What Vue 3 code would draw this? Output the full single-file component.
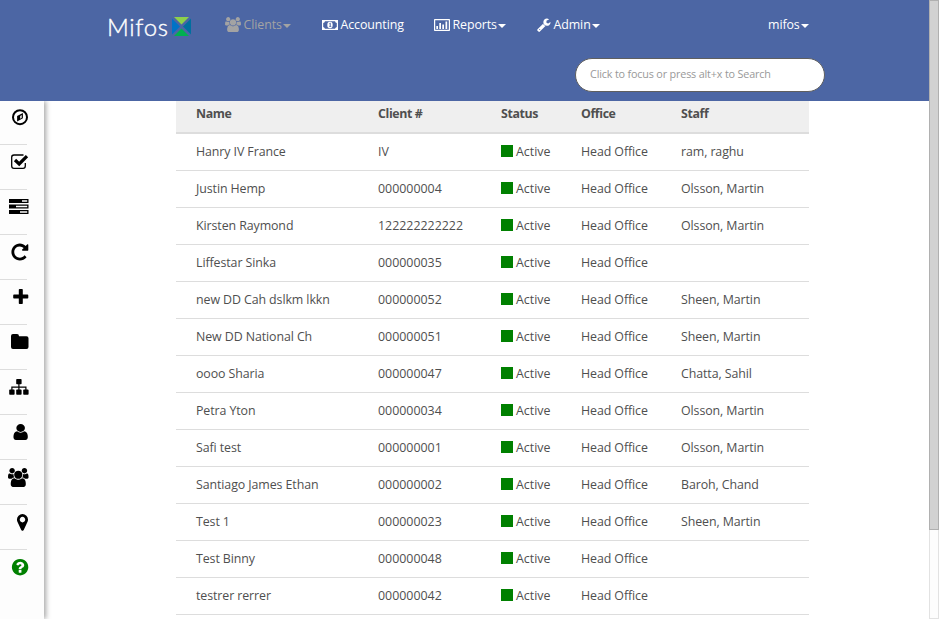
<script setup>
const clients = [
  ['Hanry IV France', 'IV', 'ram, raghu'],
  ['Justin Hemp', '000000004', 'Olsson, Martin'],
  ['Kirsten Raymond', '122222222222', 'Olsson, Martin'],
  ['Liffestar Sinka', '000000035', ''],
  ['new DD Cah dslkm lkkn', '000000052', 'Sheen, Martin'],
  ['New DD National Ch', '000000051', 'Sheen, Martin'],
  ['oooo Sharia', '000000047', 'Chatta, Sahil'],
  ['Petra Yton', '000000034', 'Olsson, Martin'],
  ['Safi test', '000000001', 'Olsson, Martin'],
  ['Santiago James Ethan', '000000002', 'Baroh, Chand'],
  ['Test 1', '000000023', 'Sheen, Martin'],
  ['Test Binny', '000000048', ''],
  ['testrer rerrer', '000000042', ''],
]

const usersPath =
  'M593 896q-162 5-265 128h-134q-82 0-138-40.500t-56-118.500q0-353 124-353 6 0 43.500 21t97.500 42.500 119 21.500q67 0 133-23-5 37-5 66 0 139 81 256zm1071 637q0 120-73 189.500t-194 69.500h-874q-121 0-194-69.500t-73-189.500q0-53 3.500-103.500t14-109 26.500-108.500 43-97.500 62-81 85.500-53.500 111.500-20q10 0 43 21.500t73 48 107 48 135 21.500 135-21.500 107-48 73-48 43-21.500q61 0 111.500 20t85.500 53.500 62 81 43 97.500 26.500 108.500 14 109 3.500 103.500zm-1024-1277q0 106-75 181t-181 75-181-75-75-181 75-181 181-75 181 75 75 181zm704 384q0 159-112.500 271.500t-271.500 112.500-271.500-112.500-112.500-271.500 112.500-271.500 271.500-112.500 271.500 112.500 112.500 271.500zm576 225q0 78-56 118.500t-138 40.500h-134q-103-123-265-128 81-117 81-256 0-29-5-66 66 23 133 23 59 0 119-21.500t97.500-42.500 43.500-21q124 0 124 353zm-128-609q0 106-75 181t-181 75-181-75-75-181 75-181 181-75 181 75 75 181z'
</script>

<template>
  <div class="page">
    <header class="topbar">
      <nav class="nav">
        <a class="brand">
          <span class="brand-name">Mifos</span>
          <svg class="brand-mark" viewBox="0 0 19 19">
            <path fill="#8ed04b" d="M2 0h15L9.500 7.500z" />
            <path fill="#0072c6" d="M0 1.500L8 9.500 0 17.500z" />
            <path fill="#006f9f" d="M19 1.500L11 9.500l8 8z" />
            <path fill="#00b04f" d="M2 19h15L9.500 11.500z" />
          </svg>
        </a>
        <a class="item clients">
          <svg width="16" height="15" viewBox="0 0 1920 1792"><path :d="usersPath" /></svg>
          <span>Clients</span><i class="caret"></i>
        </a>
        <a class="item accounting">
          <svg width="16" height="12" viewBox="0 0 16 12">
            <path fill-rule="evenodd" d="M0 1h16v10H0zM3 2.200Q2.700 3.600 1.200 4v4Q2.700 8.400 3 9.800h10Q13.300 8.400 14.800 8V4Q13.300 3.600 13 2.200z" />
            <ellipse cx="8" cy="6" rx="2.700" ry="3.200" />
            <path class="cut" d="M7 4.600l1-.8h.7v3.600h.7v.7H7v-.7h.7V4.800z" />
          </svg>
          <span>Accounting</span>
        </a>
        <a class="item reports">
          <svg width="16" height="12" viewBox="0 0 16 12">
            <path fill-rule="evenodd" d="M.8 0h14.400q.8 0 .8.800v10.400q0 .8-.8.800H.8q-.8 0-.8-.8V.8Q0 0 .8 0zM1.200 1.200v9.600h13.600V1.200z" />
            <path d="M2.300 7h1.700v3H2.300zM5.300 4h1.700v6H5.300zM8.300 5.500h1.700V10H8.300zM11.500 2.500h1.700V10h-1.700z" />
          </svg>
          <span>Reports</span><i class="caret"></i>
        </a>
        <a class="item admin">
          <svg width="14" height="14" viewBox="64 64 1700 1720">
            <path d="M448 1472q0-26-19-45t-45-19-45 19-19 45 19 45 45 19 45-19 19-45zm644-420l-682 682q-37 37-90 37-52 0-91-37l-106-108q-38-36-38-90 0-53 38-91l681-681q39 98 114.500 173.500t173.500 114.500zm634-435q0 39-23 106-47 134-164.500 217.500t-258.500 83.500q-185 0-316.500-131.500t-131.500-316.500 131.500-316.500 316.500-131.500q58 0 121.500 16.500t107.500 46.500q16 11 16 28t-16 28l-293 169v224l193 107q5-3 79-48.500t135.500-81 70.500-35.500q15 0 23.500 10t8.500 25z" />
          </svg>
          <span>Admin</span><i class="caret"></i>
        </a>
        <a class="item user"><span>mifos</span><i class="caret"></i></a>
      </nav>
      <div class="search-row">
        <div class="search"><span>Click to focus or press alt+x to Search</span></div>
      </div>
    </header>

    <div class="body">
      <aside class="sidebar">
        <a class="side">
          <svg viewBox="0 0 24 20">
            <circle cx="14" cy="10.200" r="7" fill="none" stroke="#000" stroke-width="2" />
            <path fill-rule="evenodd" d="M16.900 5.900v5.400L11.100 14.400V9.100zM14.200 8.900v2.900l1.500-1V8z" />
          </svg>
        </a>
        <a class="side">
          <svg viewBox="0 0 24 20">
            <path d="M17.500 3H8Q5.700 3 5.700 5.200v8.900q0 2.200 2.200 2.200h9.200q2.200 0 2.200-2.200V11" fill="none" stroke="#000" stroke-width="1.300" />
            <path d="M9 8l4.200 4L21 4.200" fill="none" stroke="#000" stroke-width="3.200" />
          </svg>
        </a>
        <a class="side">
          <svg viewBox="0 0 24 20">
            <path fill-rule="evenodd" d="M3 2h19.500v4H3zM16 3.300v1.500h5.200V3.300zM3 7.500h19.500v4H3zM10 8.800v1.500h11.200V8.800zM3 13h19.500v4H3zM14 14.300v1.500h7.200v-1.500z" />
          </svg>
        </a>
        <a class="side">
          <svg viewBox="0 0 24 20">
            <path transform="translate(4 .2) scale(.0110)" d="M1664 256v448q0 26-19 45t-45 19h-448q-42 0-59-40-17-39 14-69l138-138q-148-137-349-137-104 0-198.500 40.500t-163.500 109.500-109.500 163.500-40.500 198.500 40.500 198.500 109.500 163.500 163.500 109.500 198.500 40.500q119 0 225-52t179-147q7-10 23-12 15 0 25 9l137 138q9 8 9.500 20.500t-7.500 22.500q-109 132-264 204.500t-327 72.500q-156 0-298-61t-245-164-164-245-61-298 61-298 164-245 245-164 298-61q147 0 284.500 55.500t244.500 156.500l130-129q29-31 70-14 39 17 39 59z" />
          </svg>
        </a>
        <a class="side">
          <svg viewBox="0 0 24 20">
            <path d="M13.600 2h2.400q.8 0 .8.800v4.800h4.700q.8 0 .8.800v2.400q0 .8-.8.800h-4.700v4.600q0 .8-.8.800h-2.400q-.8 0-.8-.8v-4.600H8q-.8 0-.8-.8V8.400q0-.8.800-.8h4.800V2.800q0-.8.800-.8z" />
          </svg>
        </a>
        <a class="side">
          <svg viewBox="0 0 24 20">
            <path d="M7 2h4q2 0 2 2.300h7.500q2 0 2 2V15q0 2-2 2H7q-2 0-2-2V4q0-2 2-2z" />
          </svg>
        </a>
        <a class="side">
          <svg viewBox="0 0 24 20">
            <rect x="10.200" y="2" width="5.400" height="5.200" rx=".8" />
            <rect x="3.200" y="12.600" width="5.400" height="5.200" rx=".8" />
            <rect x="10.200" y="12.600" width="5.400" height="5.200" rx=".8" />
            <rect x="17.200" y="12.600" width="5.400" height="5.200" rx=".8" />
            <path d="M12.900 7v6M5.900 13v-2.900h14V13" fill="none" stroke="#000" stroke-width="1.200" />
          </svg>
        </a>
        <a class="side">
          <svg viewBox="0 0 24 20">
            <path transform="translate(4.600 .8) scale(.0112 .0103)" d="M1536 1399q0 109-62.500 187t-150.500 78h-854q-88 0-150.500-78t-62.500-187q0-85 8.500-160.500t31.500-152 58.500-131 94-89 134.500-34.500q131 128 313 128t313-128q76 0 134.500 34.500t94 89 58.500 131 31.500 152 8.500 160.500zm-256-887q0 159-112.500 271.500t-271.500 112.500-271.500-112.500-112.500-271.500 112.500-271.500 271.500-112.500 271.500 112.500 112.500 271.500z" />
          </svg>
        </a>
        <a class="side">
          <svg viewBox="0 0 24 20"><path transform="translate(2 .9) scale(.0107)" :d="usersPath" /></svg>
        </a>
        <a class="side">
          <svg viewBox="0 0 24 20">
            <path transform="translate(6.800 .7) scale(.0108)" d="M1152 640q0-106-75-181t-181-75-181 75-75 181 75 181 181 75 181-75 75-181zm256 0q0 109-33 179l-364 774q-16 33-47.500 52t-67.500 19-67.500-19-46.500-52l-365-774q-33-70-33-179 0-212 150-362t362-150 362 150 150 362z" />
          </svg>
        </a>
        <a class="side help">
          <svg viewBox="0 0 24 20">
            <path transform="translate(4.500 .6) scale(.0107)" d="M1024 1376v-192q0-14-9-23t-23-9h-192q-14 0-23 9t-9 23v192q0 14 9 23t23 9h192q14 0 23-9t9-23zm256-672q0-88-55.500-163t-138.500-116-170-41q-243 0-371 213-15 24 8 42l132 100q7 6 19 6 16 0 25-12 53-68 86-92 34-24 86-24 48 0 85.500 26t37.500 59q0 38-20 61t-68 45q-63 28-115.500 86.500t-52.500 125.500v36q0 14 9 23t23 9h192q14 0 23-9t9-23q0-19 21.500-49.500t54.500-49.500q32-18 49-28.500t46-35 44.500-48 28-60.500 12.500-81zm384 192q0 209-103 385.500t-279.500 279.500-385.500 103-385.500-103-279.500-279.500-103-385.500 103-385.500 279.500-279.500 385.500-103 385.500 103 279.500 279.500 103 385.500z" />
          </svg>
        </a>
      </aside>

      <main class="content">
        <div class="row head">
          <span>Name</span><span>Client #</span><span>Status</span><span>Office</span><span>Staff</span>
        </div>
        <div v-for="c in clients" :key="c[0]" class="row">
          <span>{{ c[0] }}</span>
          <span class="number">{{ c[1] }}</span>
          <span class="status"><i class="square"></i>Active</span>
          <span>Head Office</span>
          <span>{{ c[2] }}</span>
        </div>
      </main>
    </div>
    <div class="scrollbar"><div class="thumb"></div></div>
  </div>
</template>

<style>
body {
  overflow: hidden;
}
</style>

<style scoped>
.page {
  display: grid;
  grid-template-columns: 929px 10px;
  grid-template-rows: 101px 518px;
  width: 939px;
  height: 619px;
  overflow: hidden;
  background: #fff;
  color: #4f4f4f;
  font-family: "Open Sans", "Noto Sans", sans-serif;
  font-size: 12.4px;
  letter-spacing: -0.09px;
}
.topbar {
  background: #4c66a4;
  color: #fff;
}
.nav {
  display: flex;
  height: 49px;
  align-items: center;
  padding-left: 107px;
}
.brand {
  display: flex;
  align-items: center;
  width: 118px;
  height: 53px;
  padding-top: 4px;
  box-sizing: border-box;
}
.brand-name {
  width: 65px;
  font: 300 24px/30px Lato, sans-serif;
  letter-spacing: 0.7px;
  -webkit-text-stroke: 0.4px #fff;
}
.brand-mark {
  width: 19px;
  height: 19px;
}
.item {
  display: flex;
  align-items: center;
  white-space: nowrap;
}
.item svg {
  flex: none;
  fill: currentColor;
  margin-right: 2.500px;
}
.item .cut {
  fill: #4c66a4;
}
.clients {
  width: 97px;
  color: #a3a3a3;
}
.accounting {
  width: 112px;
}
.reports {
  width: 103px;
}
.admin {
  width: 231px;
}
.caret {
  margin: 3px 0 0 1px;
  border: 4px solid transparent;
  border-top-color: currentColor;
  border-bottom: 0;
}
.search-row {
  display: flex;
  padding: 9px 0 0 575px;
}
.search {
  box-sizing: border-box;
  display: flex;
  align-items: center;
  width: 250px;
  height: 34px;
  padding: 0 0 3px 14px;
  border: 1px solid #5f5f5f;
  border-radius: 17px;
  background: #fff;
  color: #999;
  font-size: 10.8px;
  letter-spacing: -0.17px;
  white-space: nowrap;
}
.body {
  grid-column: 1;
  display: flex;
}
.sidebar {
  width: 44px;
  background: #fdfdfd;
  box-shadow: 2px 0 5px rgba(0, 0, 0, 0.35);
  clip-path: inset(0 -10px 0 0);
}
.side {
  box-sizing: border-box;
  display: block;
  width: 27px;
  height: 45px;
  padding: 7px 0 0 6px;
  border-bottom: 1px solid #ddd;
}
.side:first-child {
  height: 44px;
  padding-top: 6px;
}
.side svg {
  display: block;
  width: 24px;
  height: 20px;
}
.help {
  border-bottom: 0;
  fill: #008000;
}
.content {
  width: 633px;
  margin-left: 132px;
}
.row {
  box-sizing: border-box;
  display: grid;
  grid-template-columns: 182px 123px 80px 100px 1fr;
  align-items: center;
  height: 37px;
  padding: 0 0 1px 20px;
  border-bottom: 1px solid #ddd;
  white-space: nowrap;
}
.head {
  height: 33px;
  padding-bottom: 6px;
  border-bottom-width: 2px;
  background: #efefef;
  font-weight: 700;
  letter-spacing: -0.4px;
}
.number,
.status {
  letter-spacing: 0;
}
.status {
  display: flex;
  align-items: center;
  gap: 3px;
}
.square {
  width: 12px;
  height: 12px;
  margin-bottom: 2px;
  background: #008000;
}
.scrollbar {
  grid-column: 2;
  grid-row: 1 / 3;
  box-sizing: border-box;
  border: 1px solid #e2e2e2;
  border-top: 0;
  background: #fdfdfd;
}
.thumb {
  box-sizing: border-box;
  height: 530px;
  margin: 0 -1px;
  border: 1px solid #b0b0b0;
  background: #d2d2d2;
}
</style>
